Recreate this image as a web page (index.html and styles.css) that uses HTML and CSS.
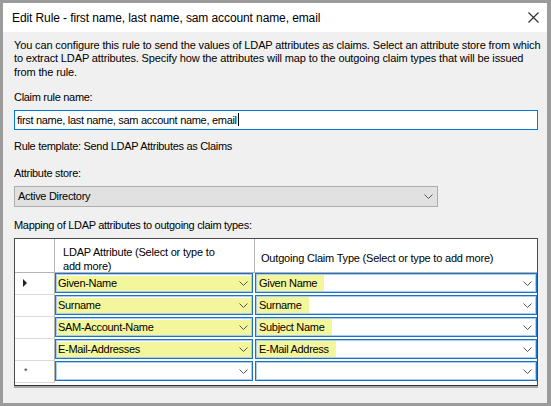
FILE: index.html
```html
<!DOCTYPE html>
<html lang="en">
<head>
    <meta charset="UTF-8">
    <title>Edit Rule</title>
    <link rel="stylesheet" href="styles.css">
</head>
<body>
    <div class="window">
        <div class="titlebar">
            <span class="title">Edit Rule - first name, last name, sam account name, email</span>
            <svg class="close" width="11" height="11" viewBox="0 0 11 11">
                <path d="M0.5 0.5L10.5 10.5M10.5 0.5L0.5 10.5" stroke="#2b2b2b" stroke-width="1.1" fill="none"/>
            </svg>
        </div>

        <div class="content">
            <p class="intro">You can configure this rule to send the values of LDAP attributes as claims. Select an attribute store from which<br>to extract LDAP attributes. Specify how the attributes will map to the outgoing claim types that will be issued<br>from the rule.</p>

            <label class="label label-rule">Claim rule name:</label>
            <div class="textbox">first name, last name, sam account name, email<span class="caret"></span></div>

            <p class="template">Rule template: Send LDAP Attributes as Claims</p>

            <label class="label label-store">Attribute store:</label>
            <div class="select">
                <span>Active Directory</span>
                <svg width="9" height="5" viewBox="0 0 9 5"><path d="M0.5 0.5L4.5 4.5L8.5 0.5" stroke="#555" fill="none"/></svg>
            </div>

            <label class="label label-map">Mapping of LDAP attributes to outgoing claim types:</label>

            <!-- grid: row header / LDAP attribute / outgoing claim -->
            <div class="grid">
                <div class="grid-head">
                    <div class="rowhead"></div>
                    <div class="colhead">LDAP Attribute (Select or type to<br>add more)</div>
                    <div class="colhead colhead-2">Outgoing Claim Type (Select or type to add more)</div>
                </div>

                <div class="grid-row">
                    <div class="rowhead"><span class="current"></span></div>
                    <div class="cell"><div class="combo hl"><span>Given-Name</span><svg width="9" height="5" viewBox="0 0 9 5"><path d="M0.5 0.5L4.5 4.5L8.5 0.5" stroke="#555" fill="none"/></svg></div></div>
                    <div class="cell"><div class="combo"><span class="mark">Given Name</span><svg width="9" height="5" viewBox="0 0 9 5"><path d="M0.5 0.5L4.5 4.5L8.5 0.5" stroke="#555" fill="none"/></svg></div></div>
                </div>
                <div class="grid-row">
                    <div class="rowhead"></div>
                    <div class="cell"><div class="combo hl"><span>Surname</span><svg width="9" height="5" viewBox="0 0 9 5"><path d="M0.5 0.5L4.5 4.5L8.5 0.5" stroke="#555" fill="none"/></svg></div></div>
                    <div class="cell"><div class="combo"><span class="mark">Surname</span><svg width="9" height="5" viewBox="0 0 9 5"><path d="M0.5 0.5L4.5 4.5L8.5 0.5" stroke="#555" fill="none"/></svg></div></div>
                </div>
                <div class="grid-row">
                    <div class="rowhead"></div>
                    <div class="cell"><div class="combo hl"><span>SAM-Account-Name</span><svg width="9" height="5" viewBox="0 0 9 5"><path d="M0.5 0.5L4.5 4.5L8.5 0.5" stroke="#555" fill="none"/></svg></div></div>
                    <div class="cell"><div class="combo"><span class="mark">Subject Name</span><svg width="9" height="5" viewBox="0 0 9 5"><path d="M0.5 0.5L4.5 4.5L8.5 0.5" stroke="#555" fill="none"/></svg></div></div>
                </div>
                <div class="grid-row">
                    <div class="rowhead"></div>
                    <div class="cell"><div class="combo hl"><span>E-Mail-Addresses</span><svg width="9" height="5" viewBox="0 0 9 5"><path d="M0.5 0.5L4.5 4.5L8.5 0.5" stroke="#555" fill="none"/></svg></div></div>
                    <div class="cell"><div class="combo"><span class="mark">E-Mail Address</span><svg width="9" height="5" viewBox="0 0 9 5"><path d="M0.5 0.5L4.5 4.5L8.5 0.5" stroke="#555" fill="none"/></svg></div></div>
                </div>
                <div class="grid-row">
                    <div class="rowhead"><span class="newrow">*</span></div>
                    <div class="cell"><div class="combo"><span></span><svg width="9" height="5" viewBox="0 0 9 5"><path d="M0.5 0.5L4.5 4.5L8.5 0.5" stroke="#555" fill="none"/></svg></div></div>
                    <div class="cell"><div class="combo"><span></span><svg width="9" height="5" viewBox="0 0 9 5"><path d="M0.5 0.5L4.5 4.5L8.5 0.5" stroke="#555" fill="none"/></svg></div></div>
                </div>
            </div>
        </div>
    </div>
</body>
</html>
```

FILE: styles.css
```css
body{
    margin: 0;
    font-family: "Liberation Sans", Arial, sans-serif;
    font-size: 11px;
    color: #000;
}
.window{
    width: 551px;
    height: 406px;
    box-sizing: border-box;
    border: 3px solid #9b9b9b;
    border-right-width: 4px;
    background-color: #f0f0f0;
    display: flex;
    flex-direction: column;
}

/* title bar */
.titlebar{
    height: 29px;
    flex: none;
    background-color: #fff;
    display: flex;
    align-items: center;
    justify-content: space-between;
    padding: 0 8px 0 9px;
    font-size: 12px;
    letter-spacing: -0.1px;
}
.close{
    margin-top: -1px;
}

.content{
    padding: 7px 9px 0 11px;
    letter-spacing: -0.3px;
}
.intro{
    margin: 0;
    line-height: 13.3px;
    letter-spacing: -0.13px;
    white-space: nowrap;
}
.label{
    display: block;
    line-height: 13px;
}
.label-rule{
    margin-top: 12px;
}
.label-store{
    margin-top: 14px;
}
.label-map{
    margin-top: 12.5px;
}

.textbox{
    margin-top: 6px;
    height: 20px;
    box-sizing: border-box;
    border: 1px solid #0078d7;
    background-color: #fff;
    padding: 0 2px;
    display: flex;
    align-items: center;
}
.caret{
    display: inline-block;
    width: 1px;
    height: 13px;
    margin-left: 1px;
    background-color: #000;
}
.template{
    margin: 10px 0 0;
    line-height: 13px;
}

.select{
    margin-top: 6px;
    width: 424px;
    height: 21px;
    box-sizing: border-box;
    border: 1px solid #adadad;
    background-color: #e1e1e1;
    display: flex;
    align-items: center;
    justify-content: space-between;
    padding: 0 4px 0 3px;
}

/* data grid */
.grid{
    margin-top: 5.5px;
    width: 524px;
    height: 148px;
    box-sizing: border-box;
    border: 1px solid #4a4a4a;
    border-bottom-color: #333;
    box-shadow: 0 2px 0 #a8a8a8;
    background-color: #fff;
}
.grid-head,
.grid-row{
    display: grid;
    grid-template-columns: 40px 200px 282px;
}
.grid-head{
    height: 34px;
    box-sizing: border-box;
    border-bottom: 1px solid #b4b4b4;
}
.grid-row{
    height: 22px;
}
.rowhead{
    border-right: 1px solid #b4b4b4;
    box-sizing: border-box;
    display: flex;
    align-items: center;
    padding-left: 8px;
}
.grid-row .rowhead{
    border-bottom: 1px solid #dadada;
}
.colhead{
    padding: 6px 0 0 8px;
    line-height: 14px;
    letter-spacing: -0.2px;
    border-right: 1px solid #b4b4b4;
}
.colhead-2{
    padding: 12px 0 0 6px;
    border-right: none;
}
.current{
    width: 0;
    height: 0;
    border-top: 4px solid transparent;
    border-bottom: 4px solid transparent;
    border-left: 4px solid #222;
}
.newrow{
    font-size: 9px;
    margin-left: 1px;
    color: #333;
}

.cell{
    padding-bottom: 2px;
}
.combo{
    height: 20px;
    box-sizing: border-box;
    border: 1px solid #1f73c6;
    box-shadow: inset 0 0 0 1px #a9cdef;
    background-color: #fff;
    display: flex;
    align-items: center;
    justify-content: space-between;
    padding: 1px 4px 0 2px;
}
.cell:nth-child(2) .combo{
    margin-right: 2px;
}
.combo.hl{
    background: linear-gradient(#fff 2px, #f4f69b 2px, #f4f69b 18px, #fff 18px);
}
.mark{
    background-color: #f4f69b;
    margin-left: -1px;
    padding: 1px 7px 0 2px;
    line-height: 15px;
}
```
